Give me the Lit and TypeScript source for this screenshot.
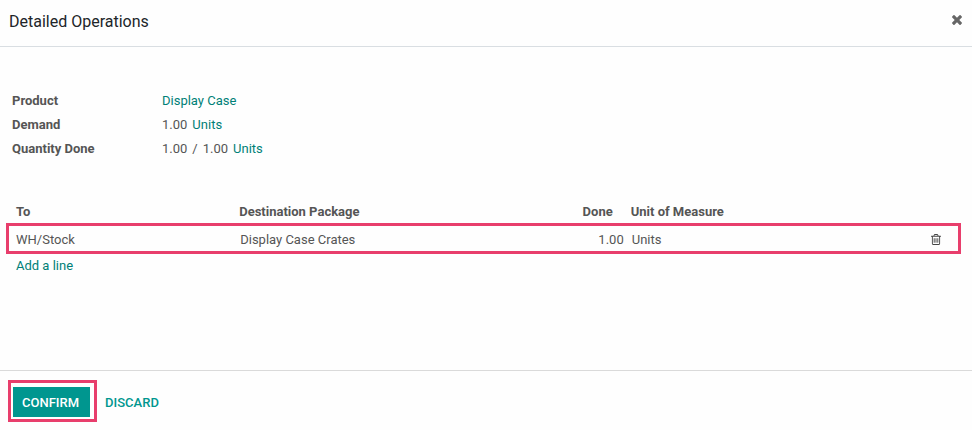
import { LitElement, html, css, svg } from "lit";
import { customElement } from "lit/decorators.js";

const closeIcon = svg`<path d="M1298 1322q0 40-28 68l-136 136q-28 28-68 28t-68-28l-294-294-294 294q-28 28-68 28t-68-28l-136-136q-28-28-28-68t28-68l294-294-294-294q-28-28-28-68t28-68l136-136q28-28 68-28t68 28l294 294 294-294q28-28 68-28t68 28l136 136q28 28 28 68t-28 68l-294 294 294 294q28 28 28 68z"/>`;

const trashIcon = svg`<path d="M512 800v576q0 14-9 23t-23 9h-64q-14 0-23-9t-9-23v-576q0-14 9-23t23-9h64q14 0 23 9t9 23zm256 0v576q0 14-9 23t-23 9h-64q-14 0-23-9t-9-23v-576q0-14 9-23t23-9h64q14 0 23 9t9 23zm256 0v576q0 14-9 23t-23 9h-64q-14 0-23-9t-9-23v-576q0-14 9-23t23-9h64q14 0 23 9t9 23zm128 724v-948h-896v948q0 22 7 40.5t14.5 27 10.5 8.5h832q3 0 10.5-8.5t14.5-27 7-40.5zm-672-1076h448l-48-117q-7-9-17-11h-317q-10 2-17 11zm928 32v64q0 14-9 23t-23 9h-96v948q0 83-47 143.5t-113 60.5h-832q-66 0-113-58.5t-47-141.5v-952h-96q-14 0-23-9t-9-23v-64q0-14 9-23t23-9h309l70-167q15-37 54-63t79-26h320q40 0 79 26t54 63l70 167h309q14 0 23 9t9 23z"/>`;

@customElement("app-root")
export class AppRoot extends LitElement {
  static styles = css`
    :host {
      display: flex;
      flex-direction: column;
      min-height: 100vh;
      background: #fefefe;
      color: #555;
      font: 13px/24px Roboto, "Liberation Sans", sans-serif;
    }
    * {
      box-sizing: border-box;
    }
    button {
      font: inherit;
      color: inherit;
      background: none;
      border: 0;
      padding: 0;
      cursor: pointer;
    }
    a {
      color: #008077;
      text-decoration: none;
    }
    svg {
      display: block;
      fill: currentColor;
    }
    .header {
      display: flex;
      align-items: center;
      justify-content: space-between;
      padding: 10px 10px 12px 9px;
      border-bottom: 1px solid #d9dee2;
    }
    .title {
      margin: 0;
      font-size: 16px;
      font-weight: 400;
      color: #212529;
    }
    .close {
      padding-bottom: 4px;
      color: #666;
    }
    .body {
      flex: 1;
      padding: 42px 11px 24px 6px;
    }
    .fields {
      display: grid;
      grid-template-columns: 150px 1fr;
      margin: 0 6px 38px;
    }
    .fields dt {
      font-weight: 700;
    }
    .fields dd {
      display: flex;
      gap: 5px;
      margin: 0;
    }
    .lines {
      width: 100%;
      table-layout: fixed;
      border-collapse: collapse;
    }
    .lines th,
    .lines td {
      padding: 0 4px;
      text-align: left;
    }
    .lines th {
      padding-top: 2px;
      line-height: 22px;
      font-weight: 700;
    }
    .lines td {
      padding-top: 3px;
      padding-left: 5px;
      padding-right: 3px;
      height: 31px;
    }
    .lines th:first-child,
    .lines td:first-child {
      padding-left: 10px;
    }
    .lines .number {
      text-align: right;
    }
    .lines th.number {
      padding-right: 14px;
    }
    .to {
      width: 24%;
    }
    .package {
      width: 27%;
    }
    .done {
      width: 14%;
    }
    .highlight {
      outline: 3px solid #e83e6c;
      outline-offset: -3px;
    }
    .lines td.actions {
      padding-top: 1px;
      padding-right: 20px;
    }
    .trash {
      display: block;
      margin-left: auto;
      color: #444;
    }
    .add {
      display: inline-block;
      margin-left: 10px;
    }
    .footer {
      display: flex;
      align-items: center;
      gap: 8px;
      padding: 9px 8px 8px;
      border-top: 1px solid #dadada;
      font-weight: 500;
    }
    .marked {
      border: 3px solid #e83e6c;
      padding: 4px 4px 2px 2px;
    }
    .confirm {
      display: block;
      height: 30px;
      padding: 1px 11px 0 9px;
      color: #fff;
      background: #00968f;
    }
    .discard {
      padding-top: 3px;
      color: #00968f;
    }
  `;

  render() {
    return html`
      <header class="header">
        <h1 class="title">Detailed Operations</h1>
        <button class="close" aria-label="Close">
          <svg width="10" height="10" viewBox="110 366 1188 1188">${closeIcon}</svg>
        </button>
      </header>
      <main class="body">
        <dl class="fields">
          <dt>Product</dt>
          <dd><a href="#">Display Case</a></dd>
          <dt>Demand</dt>
          <dd><span>1.00</span><a href="#">Units</a></dd>
          <dt>Quantity Done</dt>
          <dd><span>1.00</span><span>/</span><span>1.00</span><a href="#">Units</a></dd>
        </dl>
        <table class="lines">
          <thead>
            <tr>
              <th class="to">To</th>
              <th class="package">Destination Package</th>
              <th class="done number">Done</th>
              <th>Unit of Measure</th>
              <th></th>
            </tr>
          </thead>
          <tbody>
            <tr class="highlight">
              <td>WH/Stock</td>
              <td>Display Case Crates</td>
              <td class="number">1.00</td>
              <td>Units</td>
              <td class="actions">
                <button class="trash" aria-label="Delete line">
                  <svg width="10" height="11" viewBox="0 192 1408 1536">${trashIcon}</svg>
                </button>
              </td>
            </tr>
          </tbody>
        </table>
        <a class="add" href="#">Add a line</a>
      </main>
      <footer class="footer">
        <div class="marked"><button class="confirm">CONFIRM</button></div>
        <button class="discard">DISCARD</button>
      </footer>
    `;
  }
}
